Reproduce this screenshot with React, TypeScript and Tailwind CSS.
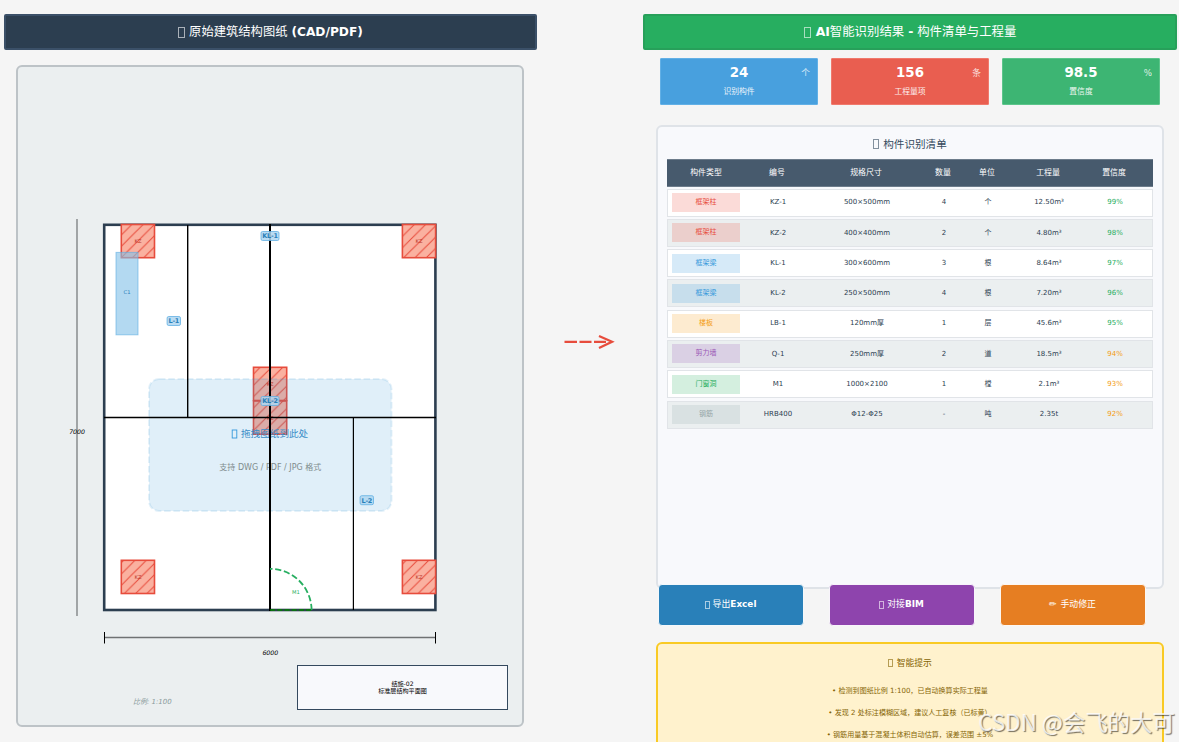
import type { ReactNode } from 'react';

const stats = [
  { value: '24', unit: '个', label: '识别构件', className: 'bg-[#48a0de] border-[#62b0e6]' },
  { value: '156', unit: '条', label: '工程量项', className: 'bg-[#e95e50] border-[#f0796c]' },
  { value: '98.5', unit: '%', label: '置信度', className: 'bg-[#3db573] border-[#5cc58b]' },
];

const headers = ['构件类型', '编号', '规格尺寸', '数量', '单位', '工程量', '置信度'];

const rows = [
  { type: '框架柱', badge: 'bg-[#fbdbd8] text-[#e74c3c]', cells: ['KZ-1', '500×500mm', '4', '个', '12.50m³'], score: 99 },
  { type: '框架柱', badge: 'bg-[#ebcfcc] text-[#e74c3c]', cells: ['KZ-2', '400×400mm', '2', '个', '4.80m³'], score: 98 },
  { type: '框架梁', badge: 'bg-[#d6eaf8] text-[#3498db]', cells: ['KL-1', '300×600mm', '3', '根', '8.64m³'], score: 97 },
  { type: '框架梁', badge: 'bg-[#c7deec] text-[#3498db]', cells: ['KL-2', '250×500mm', '4', '根', '7.20m³'], score: 96 },
  { type: '楼板', badge: 'bg-[#fdebd0] text-[#f39c12]', cells: ['LB-1', '120mm厚', '1', '层', '45.6m³'], score: 95 },
  { type: '剪力墙', badge: 'bg-[#dad0e4] text-[#9b59b6]', cells: ['Q-1', '250mm厚', '2', '道', '18.5m³'], score: 94 },
  { type: '门窗洞', badge: 'bg-[#d4efdf] text-[#27ae60]', cells: ['M1', '1000×2100', '1', '樘', '2.1m³'], score: 93 },
  { type: '钢筋', badge: 'bg-[#d9e1e2] text-[#95a5a6]', cells: ['HRB400', 'Φ12-Φ25', '-', '吨', '2.35t'], score: 92 },
];

const tips = [
  '• 检测到图纸比例 1:100，已自动换算实际工程量',
  '• 发现 2 处标注模糊区域，建议人工复核（已标黄）',
  '• 钢筋用量基于混凝土体积自动估算，误差范围 ±5%',
];

const columns = [
  { x: 121.3, y: 224.5 },
  { x: 402.4, y: 224.5 },
  { x: 253.5, y: 367.3 },
  { x: 253.5, y: 401 },
  { x: 121.3, y: 560.3 },
  { x: 402.4, y: 560.3 },
];

const beamTags = [
  { label: 'KL-1', x: 270, y: 236, w: 18 },
  { label: 'KL-2', x: 270, y: 401, w: 18 },
  { label: 'L-1', x: 173.8, y: 321, w: 13.4 },
  { label: 'L-2', x: 366.8, y: 500.2, w: 13.4 },
];

const GRID = 'grid grid-cols-[78px_64px_114px_40px_48px_74px_58px] items-center text-center';

// Hollow box used as the leading icon of a title
function Box({ className = '' }: { className?: string }) {
  return <span className={`inline-block border border-current opacity-60 shrink-0 ${className}`} />;
}

function Header({ className, children }: { className: string; children: ReactNode }) {
  return (
    <h1 className={`flex items-center justify-center h-[36px] rounded-[2px] border-2 text-white whitespace-pre ${className}`}>
      {children}
    </h1>
  );
}

function FloorPlan() {
  return (
    <svg width="504" height="658" viewBox="18 67 504 658" textAnchor="middle" className="block">
      <defs>
        <pattern id="hatch" width="11.3" height="11.3" patternUnits="userSpaceOnUse" x="121" y="224">
          <path d="M-2 13.3L13.3 -2M-2 2L2 -2M9.3 13.3L13.3 9.3" stroke="#e74c3c" strokeWidth="1" />
        </pattern>
      </defs>

      {/* Outer walls */}
      <rect x="104.2" y="224.8" width="331.2" height="385.2" fill="#fff" stroke="#2c3e50" strokeWidth="2.6" />

      {/* Columns */}
      {columns.map((c) => (
        <g key={`${c.x}-${c.y}`}>
          <rect x={c.x} y={c.y} width="33.2" height="33.2" fill="#fab1a0" />
          <rect x={c.x} y={c.y} width="33.2" height="33.2" fill="url(#hatch)" stroke="#e74c3c" strokeWidth="1.6" />
        </g>
      ))}

      {/* Window */}
      <rect x="116" y="252.4" width="22" height="82.4" fill="#85c1e9" fillOpacity="0.62" stroke="#5dade2" strokeOpacity="0.6" />

      {/* Drop zone */}
      <rect x="149" y="379" width="242.5" height="132" rx="10" fill="#3091d8" fillOpacity="0.15" stroke="#3091d0" strokeOpacity="0.13" strokeWidth="2" strokeDasharray="6.5 2.8" />
      <rect x="232.2" y="430" width="4.6" height="8" fill="none" stroke="#3498db" strokeWidth="0.9" />
      <text x="274.6" y="437.4" fontSize="9.6" fill="#3a8dc8">拖拽图纸到此处</text>
      <text x="270.3" y="470" fontSize="8" fill="#7f8c8d">支持 DWG / PDF / JPG 格式</text>

      {/* Column and window marks */}
      <g fontSize="5.2" fill="#c0392b">
        {columns.map((c) => (
          <text key={`${c.x}-${c.y}`} x={c.x + 16.7} y={c.y + 18.6}>KZ</text>
        ))}
      </g>
      <text x="127" y="294.4" fontSize="5.2" fill="#2980b9">C1</text>

      {/* Beams */}
      <g stroke="#000">
        <path d="M187.7 225V417.5" strokeWidth="1.4" />
        <path d="M353.4 417.5V610" strokeWidth="1.2" />
        <path d="M104 417.5H436" strokeWidth="1.7" />
        <path d="M270 224V611" strokeWidth="2" />
      </g>
      {beamTags.map((t) => (
        <g key={t.label}>
          <rect x={t.x - t.w / 2} y={t.y - 4.5} width={t.w} height="9" rx="1.6" fill="#aed6f1" fillOpacity="0.85" stroke="#5dade2" strokeOpacity="0.85" strokeWidth="0.9" />
          <text x={t.x} y={t.y + 2.3} fontSize="6.5" letterSpacing="-0.25" fontWeight="bold" fill="#2980b9">{t.label}</text>
        </g>
      ))}

      {/* Door */}
      <path d="M311.6 610A41.6 41.6 0 0 0 270 568.8" fill="none" stroke="#27ae60" strokeWidth="1.8" strokeDasharray="6.2 2.7" />
      <path d="M270 610H312" stroke="#008000" strokeWidth="1.5" strokeDasharray="5.2 2" />
      <text x="296" y="594.4" fontSize="5.2" fill="#27ae60">M1</text>

      {/* Dimensions */}
      <path d="M77 219V616" stroke="#8e9294" strokeWidth="1.6" />
      <path d="M104.5 637.5H435.5" stroke="#6f7273" strokeWidth="1.3" />
      <path d="M104.5 632V643.5M435.5 632V643.5" stroke="#000" strokeWidth="1" />
      <g fontSize="6.2" fontStyle="italic" fill="#000">
        <text x="77" y="434.4">7000</text>
        <text x="270.3" y="654.6">6000</text>
      </g>

      {/* Title block */}
      <rect x="297.5" y="665.5" width="210" height="44" fill="#f8f9fc" stroke="#34495e" />
      <g fontSize="6.1" fill="#000">
        <text x="402.5" y="686">结施-02</text>
        <text x="402.5" y="693.3">标准层结构平面图</text>
      </g>
      <text x="152.3" y="703.8" fontSize="7" fontStyle="italic" fill="#8a9a9b">比例: 1:100</text>
    </svg>
  );
}

function ComponentTable() {
  return (
    <div className="mx-[9px] mt-[6.5px]">
      <div className={`${GRID} h-[28px] bg-[#475a6d] border-y border-[#6d7c8b] text-[7.9px] text-white`}>
        {headers.map((h) => (
          <span key={h}>{h}</span>
        ))}
      </div>
      <div className="flex flex-col gap-[2.3px] mt-[2px]">
        {rows.map((row, i) => (
          <div
            key={row.cells[0]}
            className={`${GRID} h-[28px] border border-[#e1e4e8] text-[7px] text-[#2c3e50] ${i % 2 ? 'bg-[#ebeff0]' : 'bg-white'}`}
          >
            <span className={`ml-1 mr-[6px] h-[19px] leading-[18px] ${row.badge}`}>{row.type}</span>
            {row.cells.map((cell, j) => (
              <span key={j}>{cell}</span>
            ))}
            <span className={row.score >= 95 ? 'text-[#27ae60]' : 'text-[#f39c12]'}>{row.score}%</span>
          </div>
        ))}
      </div>
    </div>
  );
}

export default function App() {
  return (
    <div className="relative flex w-[1179px] h-[742px] overflow-hidden bg-[#f5f5f5] pt-[14px] pl-1 font-['DejaVu_Sans','Noto_Sans_CJK_SC',sans-serif]">
      <section className="w-[533px] shrink-0">
        <Header className="bg-[#2c3e50] border-[#3b5068] text-[12.2px]">
          <Box className="w-[7px] h-[11px] mt-px mr-1" />
          <span className="text-[12.3px]">原始建筑结构图纸 </span><b>(CAD/PDF)</b>
        </Header>
        <div className="mt-[15px] ml-3 w-[508px] h-[662px] rounded-[6px] border-2 border-[#bdc3c7] bg-[#ebeff0]">
          <FloorPlan />
        </div>
      </section>

      <div className="w-[106px] shrink-0 pt-[318px] pl-[26px]">
        <svg width="54" height="20" viewBox="0 0 54 20" fill="none" stroke="#e74c3c" strokeWidth="2.3">
          <path d="M1.5 9.8H14M16.5 9.8H28.5M31 9.8H43" />
          <path d="M36 4L49 9.8L36 16" />
        </svg>
      </div>

      <section className="w-[534px] shrink-0">
        <Header className="bg-[#27ae60] border-[#27a05a] text-[12.4px]">
          <Box className="w-[7px] h-[11px] mt-px mr-[5px]" />
          <b>AI</b>智能识别结果 <b>-</b> 构件清单与工程量
        </Header>

        <div className="flex gap-[13px] mt-2 ml-[17px]">
          {stats.map((s) => (
            <div key={s.label} className={`relative w-[158px] h-[47px] rounded-[1px] border text-center text-white ${s.className}`}>
              <p className="mt-[5px] text-[13.4px] leading-[18px] font-bold">{s.value}</p>
              <p className="mt-[4px] text-[7.8px] leading-[11px] opacity-90">{s.label}</p>
              <span className="absolute right-[7px] top-[9px] text-[8.7px] leading-[11px] opacity-80">{s.unit}</span>
            </div>
          ))}
        </div>

        <div className="mt-5 ml-[13px] w-[508px] h-[464px] rounded-[6px] border-2 border-[#dfe3e8] bg-[#f8f9fc]">
          <h2 className="flex items-center justify-center gap-1 pt-[9px] text-[10.6px] leading-[16px] text-[#34495e]">
            <Box className="w-[6px] h-[10px]" />
            构件识别清单
          </h2>
          <ComponentTable />
        </div>

        <div className="relative flex gap-[25px] -mt-[5px] ml-[14.5px] text-[8.9px] text-white">
          <button className="flex items-center justify-center w-[146px] h-[42px] rounded-[4px] border border-[#f3f8fb] bg-[#2980b9]">
            <Box className="w-[5px] h-[8px] mr-[3px]" />
            导出<b>Excel</b>
          </button>
          <button className="flex items-center justify-center w-[146px] h-[42px] rounded-[4px] border border-[#f8f4fb] bg-[#8e44ad]">
            <Box className="w-[5px] h-[8px] mr-[3px]" />
            对接<b>BIM</b>
          </button>
          <button className="flex items-center justify-center w-[146px] h-[42px] rounded-[4px] border border-[#fdf7f1] bg-[#e67e22]">
            <b className="mr-1">✏</b>手动修正
          </button>
        </div>

        <div className="mt-[16px] ml-[13px] w-[508px] h-[130px] rounded-t-[6px] border-2 border-[#f9ca24] bg-[#fff2cd] text-[#856404]">
          <h2 className="flex items-center justify-center gap-1 pt-[12px] text-[8.8px] leading-[14px]">
            <Box className="w-[4.5px] h-[8px]" />
            智能提示
          </h2>
          <ul className="mt-[10px] text-center text-[7.05px] leading-[22px]">
            {tips.map((tip) => (
              <li key={tip}>{tip}</li>
            ))}
          </ul>
        </div>
      </section>

      {/* Watermark */}
      <span className="absolute right-[4px] bottom-[5px] text-[22.4px] leading-[32px] whitespace-nowrap text-white/80 font-['Noto_Sans_CJK_SC',sans-serif] [text-shadow:1px_1px_1px_rgba(0,0,0,0.55)]">
        CSDN @会飞的大可
      </span>
    </div>
  );
}
